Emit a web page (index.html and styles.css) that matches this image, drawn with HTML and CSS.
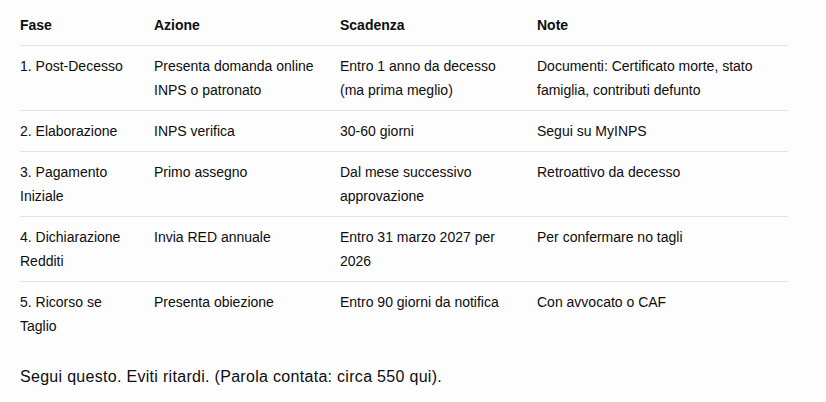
FILE: index.html
```html
<!DOCTYPE html>
<html lang="it">
<head>
<meta charset="utf-8">
<title>Fasi</title>
<link rel="stylesheet" href="styles.css">
</head>
<body>
<div class="scroller">
  <table class="steps">
    <colgroup>
      <col class="c1"><col class="c2"><col class="c3"><col class="c4">
    </colgroup>
    <thead>
      <tr><th>Fase</th><th>Azione</th><th>Scadenza</th><th>Note</th></tr>
    </thead>
    <tbody>
      <tr><td>1. Post-Decesso</td><td>Presenta domanda online INPS o patronato</td><td>Entro 1 anno da decesso (ma prima meglio)</td><td>Documenti: Certificato morte, stato famiglia, contributi defunto</td></tr>
      <tr><td>2. Elaborazione</td><td>INPS verifica</td><td>30-60 giorni</td><td>Segui su MyINPS</td></tr>
      <tr><td>3. Pagamento Iniziale</td><td>Primo assegno</td><td>Dal mese successivo approvazione</td><td>Retroattivo da decesso</td></tr>
      <tr><td>4. Dichiarazione Redditi</td><td>Invia RED annuale</td><td>Entro 31 marzo 2027 per 2026</td><td>Per confermare no tagli</td></tr>
      <tr><td>5. Ricorso se Taglio</td><td>Presenta obiezione</td><td>Entro 90 giorni da notifica</td><td>Con avvocato o CAF</td></tr>
    </tbody>
  </table>
</div>
<p class="closing">Segui questo. Eviti ritardi. (Parola contata: circa 550 qui).</p>
</body>
</html>
```
FILE: styles.css
```css
html, body {
  margin: 0;
  padding: 0;
  background: #fdfdfd;
  color: #0d0d0d;
  font-family: "Liberation Sans", Arial, sans-serif;
}

.scroller {
  margin: 5px 38px 0 20px;
  height: 350px;
  overflow: hidden;
}

.steps {
  width: 100%;
  table-layout: fixed;
  border-collapse: collapse;
  font-size: 14px;
  line-height: 24px;
}

.c1 { width: 134px; }
.c2 { width: 186px; }
.c3 { width: 197px; }

.steps th,
.steps td {
  padding: 8px 16px 8px 0;
  text-align: left;
  vertical-align: top;
}

.steps th:last-child,
.steps td:last-child {
  padding-right: 0;
}

.steps th {
  font-weight: 700;
  border-bottom: 1px solid #e3e3e3;
}

.steps tbody tr + tr td {
  border-top: 1px solid #e3e3e3;
}

.closing {
  margin: 10px 0 0 20px;
  font-size: 16px;
  line-height: 24px;
  letter-spacing: 0.3px;
}
```
